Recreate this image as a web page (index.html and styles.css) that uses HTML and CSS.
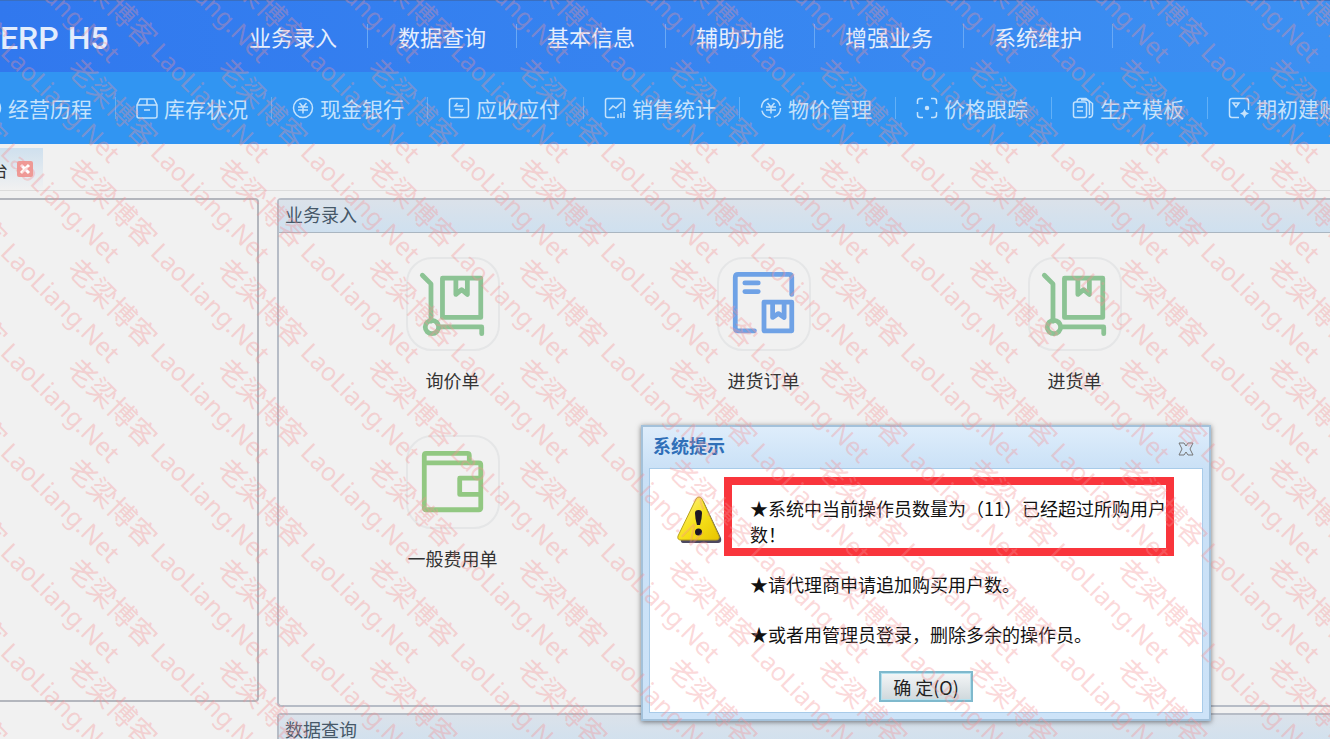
FILE: index.html
```html
<!DOCTYPE html>
<html lang="zh-CN">
  <head>
    <meta charset="UTF-8" />
    <meta name="viewport" content="width=device-width, initial-scale=1.0" />
    <title>ERP H5</title>
    <link rel="stylesheet" href="styles.css">
  </head>
  <body>
    <header>
      <div class="topbar">
        <h1 class="logo">ERP <span>H5</span></h1>
        <nav class="menu" aria-label="主菜单">
          <a href="#">业务录入</a>
          <a href="#">数据查询</a>
          <a href="#">基本信息</a>
          <a href="#">辅助功能</a>
          <a href="#">增强业务</a>
          <a href="#">系统维护</a>
        </nav>
      </div>
      <nav class="shortcuts" aria-label="快捷菜单">
        <a href="#">
          <svg viewBox="0 0 22 22"><circle cx="11" cy="11" r="9.5" /></svg>经营历程</a>
        <a href="#">
          <svg viewBox="0 0 22 22"><path d="M4 2h14l3 6v11q0 2-2 2H3q-2 0-2-2V8zM1 8h20M11 2v6M8 13h6" /></svg>库存状况</a>
        <a href="#">
          <svg viewBox="0 0 22 22"><circle cx="11" cy="11" r="9.5" /><path d="M7.500 6l3.500 4 3.500-4M6 10h10M6 13h10M11 10v6.500" /></svg>现金银行</a>
        <a href="#">
          <svg viewBox="0 0 22 22"><rect x="1.500" y="1.500" width="19" height="19" rx="2" /><path d="M15 9H7l2.500-3M7 12.500h8l-2.500 3" /></svg>应收应付</a>
        <a href="#">
          <svg viewBox="0 0 22 22"><path d="M11 20.500H3.500q-2 0-2-2v-15q0-2 2-2h15q2 0 2 2V14M5 13l4-4 3 2 6-6M14 17v4M17 16v5M20 15v6" /></svg>销售统计</a>
        <a href="#">
          <svg viewBox="0 0 22 22"><circle cx="11" cy="11" r="9.5" stroke-dasharray="12 3" /><path d="M7.500 6l3.500 4 3.500-4M6 10h10M6 13h10M11 10v6.500" /></svg>物价管理</a>
        <a href="#">
          <svg viewBox="0 0 22 22"><path d="M1.500 7V4q0-2.500 2.500-2.500h3M15 1.500h3q2.500 0 2.500 2.500v3M20.500 15v3q0 2.500-2.500 2.500h-3M7 20.500H4q-2.500 0-2.500-2.500v-3" /><circle cx="11" cy="11" r="1.500" fill="currentColor" /></svg>价格跟踪</a>
        <a href="#">
          <svg viewBox="0 0 22 22"><rect x="1.500" y="5" width="13" height="15.500" rx="2" /><path d="M5 5q0-3.500 3-3.500h6l6.500 5V17q0 3.500-4 3.500M9 3h5q3.500 0 3.500 4v11M5 10h6M5 14h6" /></svg>生产模板</a>
        <a href="#">
          <svg viewBox="0 0 22 22"><path d="M11 20.500H4q-2.500 0-2.500-2.500V4q0-2.500 2.500-2.500h14q2.500 0 2.500 2.500v9M5 6h6L8 10z" /><path d="M16.500 12l1.500 3 3 1.500-3 1.500-1.500 3-1.500-3-3-1.500 3-1.500z" fill="currentColor" stroke="none" /></svg>期初建账</a>
      </nav>
    </header>

    <div class="tabs">
      <div class="tab">
        台
        <button class="tab-close" aria-label="关闭标签">
          <svg viewBox="0 0 16 16"><path d="M4 4l8 8M12 4l-8 8" /></svg>
        </button>
      </div>
    </div>

    <main>
      <aside class="side"></aside>
      <div class="workspace">
        <section class="panel">
          <h2>业务录入</h2>
          <div class="tiles">
            <a class="tile green" href="#">
              <svg viewBox="0 0 94 94"><path d="M15 17l9 9v39M36 20h40v41H36zM50 20v17l6-5 6 5V20M33 71h44v7" /><circle cx="25" cy="71" r="7" /></svg>
              询价单
            </a>
            <a class="tile blue" href="#">
              <svg viewBox="0 0 94 94"><path d="M76 37V19q0-3-3-3H20q-3 0-3 3v53q0 3 3 3h17M27 25h14M27 34h14M47 45h29v30H47zM56 45v16l6-4 6 4V45" /></svg>
              进货订单
            </a>
            <a class="tile green" href="#">
              <svg viewBox="0 0 94 94"><path d="M15 17l9 9v39M36 20h40v41H36zM50 20v17l6-5 6 5V20M33 71h44v7" /><circle cx="25" cy="71" r="7" /></svg>
              进货单
            </a>
            <a class="tile lime" href="#">
              <svg viewBox="0 0 94 94"><path d="M17 27V19q0-2 2-2h43q2 0 2 2v8M17 27h57q2 0 2 2v45q0 2-2 2H19q-2 0-2-2zM76 43H54v17h22" /></svg>
              一般费用单
            </a>
          </div>
        </section>
        <section class="panel">
          <h2>数据查询</h2>
        </section>
      </div>
    </main>

    <div class="dialog" role="dialog" aria-labelledby="dialogTitle">
      <div class="dialog-head">
        <h2 id="dialogTitle">系统提示</h2>
        <button class="dialog-close" aria-label="关闭">
          <svg viewBox="0 0 16 16"><path d="M1 2h5l2 3 2-3h5l-3 6 3 6h-5l-2-3-2 3H1l3-6z" /></svg>
        </button>
      </div>
      <div class="dialog-body">
        <svg class="warning" viewBox="0 0 46 48">
          <defs>
            <linearGradient id="yellow" x1="0" y1="0" x2="1" y2="1">
              <stop offset="0" stop-color="#fff59a" />
              <stop offset=".5" stop-color="#f7e21c" />
              <stop offset="1" stop-color="#e8c400" />
            </linearGradient>
          </defs>
          <path d="M24 4q2 0 3 2l17 36q1 5-3 5H7q-4 0-3-4L21 6q1-2 3-2z" fill="#4d4960" stroke="none" />
          <path d="M22 1q2 0 3 2l17 37q1 4-3 4H4q-4 0-3-4L19 3q1-2 3-2z" fill="url(#yellow)" stroke="#b9a21c" />
          <path d="M18 17q0-3 3.500-3t3.500 3q0 5-2 12h-3q-2-7-2-12z" fill="#1d1626" stroke="none" />
          <circle cx="21.500" cy="36" r="3.500" fill="#1d1626" stroke="none" />
        </svg>
        <div class="message">
          <p class="marked">★系统中当前操作员数量为（11）已经超过所购用户<br>数！</p>
          <p>★请代理商申请追加购买用户数。</p>
          <p>★或者用管理员登录，删除多余的操作员。</p>
        </div>
        <button class="ok">确 定(O)</button>
      </div>
    </div>

    <div class="watermark" id="watermark" aria-hidden="true"></div>

    <script>
      // repeat the blog mark over the whole window, starting above the top left corner
      var mark = document.getElementById("watermark");
      var cols = Math.ceil(window.innerWidth / 150) + 2;
      var rows = Math.ceil(window.innerHeight / 100) + 2;
      mark.style.setProperty("--cols", cols);

      for (var i = 0; i < cols * rows; i++) {
        var cell = document.createElement("div");
        cell.innerHTML = "<span>老梁博客 <i>LaoLiang.Net</i></span>";
        mark.appendChild(cell);
      }
    </script>
  </body>
</html>
```
FILE: styles.css
```css
* {
  box-sizing: border-box;
}

body {
  margin: 0;
  height: 100vh;
  position: relative;
  overflow: hidden;
  display: flex;
  flex-direction: column;
  background: #f1f1f1;
  color: #333;
  font-family: "Noto Sans CJK SC", sans-serif;
  font-size: 18px;
}

h1,
h2,
p {
  margin: 0;
  font-weight: normal;
}

a {
  color: inherit;
  text-decoration: none;
}

button {
  padding: 0;
  border: 0;
  background: none;
  font: inherit;
}

svg {
  display: block;
  fill: none;
  stroke: currentColor;
}

/* header */
.topbar {
  height: 72px;
  padding-bottom: 2px;
  display: flex;
  align-items: center;
  border-top: 1px solid #3a6fc0;
  background: linear-gradient(to right, #3178ee, #3c90f2);
}

.logo {
  width: 219px;
  padding-top: 4px;
  display: flex;
  align-items: center;
  gap: 9px;
  color: #e3edfd;
  font-family: Roboto, sans-serif;
  font-size: 32px;
  font-weight: 500;
  line-height: 40px;
}

.menu {
  display: flex;
  color: #e4eefd;
  font-size: 22px;
  line-height: 24px;
}

.menu a {
  width: 149px;
  text-align: center;
  border-right: 1px solid #6aa9f5;
}

.shortcuts {
  height: 72px;
  display: flex;
  align-items: center;
  overflow: hidden;
  background: #3195f2;
  color: #c4e2fc;
  font-size: 21px;
  line-height: 22px;
}

.shortcuts a {
  flex: none;
  width: 156px;
  padding-left: 20px;
  display: flex;
  align-items: center;
  gap: 6px;
  white-space: nowrap;
  border-right: 1px solid #62b0f7;
}

.shortcuts a:first-child {
  margin-left: -40px;
}

.shortcuts svg {
  flex: none;
  width: 22px;
  height: 22px;
  stroke-width: 1.5;
}

/* tabs */
.tabs {
  height: 47px;
  padding-top: 4px;
  border-bottom: 1px solid #dcdcdc;
}

.tab {
  width: 52px;
  height: 42px;
  margin-left: -9px;
  display: flex;
  align-items: center;
  gap: 9px;
  background: linear-gradient(#cfe0ee, #f1f1f1);
  font-size: 17px;
}

.tab-close {
  width: 16px;
  height: 16px;
  border-radius: 2px;
  background: #ee9a96;
  color: #fff;
}

.tab-close svg {
  stroke-width: 3;
}

/* work area */
main {
  flex: 1;
  min-height: 0;
  padding-top: 7px;
  display: flex;
  gap: 18px;
}

.side {
  width: 259px;
  margin-bottom: 37px;
  border: 2px solid #b3b6bd;
  border-left: 0;
  border-radius: 0 4px 4px 0;
}

.workspace {
  flex: 1;
  min-width: 0;
  display: flex;
  flex-direction: column;
  gap: 6px;
}

.panel {
  flex: none;
  border: 2px solid #b6bcc6;
  border-right: 0;
  border-radius: 4px 0 0 4px;
}

.panel h2 {
  padding: 0 0 4px 6px;
  border-bottom: 1px solid #aab6c1;
  background: linear-gradient(#dbe2ea, #cfe0ef);
  color: #465868;
  font-size: 18px;
  line-height: 28px;
}

.tiles {
  min-height: 472px;
  padding: 24px 0 0 18px;
  display: grid;
  grid-template-columns: repeat(auto-fill, 311px);
  grid-auto-rows: 178px;
  overflow: hidden;
}

.tile {
  display: flex;
  flex-direction: column;
  align-items: center;
  gap: 16px;
  line-height: 26px;
}

.tile svg {
  width: 94px;
  height: 94px;
  border: 2px solid #e5e6e7;
  border-radius: 26px;
  stroke-width: 5;
  stroke-linejoin: round;
  stroke-linecap: round;
}

.green svg {
  color: #8cc394;
}

.lime svg {
  color: #92c882;
}

.blue svg {
  color: #6fa2e6;
}

/* message dialog */
.dialog {
  position: absolute;
  top: 425px;
  left: 641px;
  width: 570px;
  padding: 0 6px 6px;
  border: 2px solid #a3c1da;
  background: linear-gradient(#deedfb, #c9e0f6 44px, #cde3f8);
  box-shadow: 0 1px 5px rgba(0, 0, 0, 0.5);
  color: #111;
}

.dialog-head {
  height: 41px;
  padding: 0 9px 6px 4px;
  display: flex;
  align-items: center;
  justify-content: space-between;
}

.dialog-head h2 {
  color: #2f6fb8;
  font-size: 18px;
  font-weight: bold;
}

.dialog-close {
  width: 16px;
  height: 14px;
  margin-top: 7px;
  color: #777;
}

.dialog-body {
  padding: 8px 0 10px;
  display: grid;
  grid-template-columns: 74px 1fr;
  justify-items: start;
  border: 1px solid #a8cbe9;
  background: #fff;
}

.warning {
  width: 46px;
  height: 48px;
  margin: 19px 0 0 27px;
}

.message {
  display: flex;
  flex-direction: column;
  gap: 24px;
  line-height: 26px;
  white-space: nowrap;
}

.message p {
  padding-left: 26px;
}

.message .marked {
  width: 450px;
  margin-bottom: -9px;
  padding: 10px 0 1px 18px;
  border: 8px solid #f9353c;
}

.ok {
  grid-column: 1 / -1;
  justify-self: center;
  width: 94px;
  height: 31px;
  margin-top: 24px;
  border: 2px solid #7fb9cd;
  background: linear-gradient(#f4f6f7, #cfd8dc);
  box-shadow: inset 0 0 0 1px #b5e1ee;
  color: #222;
}

/* watermark, above everything */
.watermark {
  position: absolute;
  top: -138px;
  left: -226px;
  display: grid;
  grid-template-columns: repeat(var(--cols), 150px);
  grid-auto-rows: 100px;
  color: rgba(245, 145, 148, 0.36);
  font-size: 28px;
  line-height: 0;
  white-space: nowrap;
  pointer-events: none;
}

.watermark span {
  display: block;
  width: 0;
  transform: rotate(45deg);
  transform-origin: 0 0;
}

.watermark i {
  font-family: "Noto Sans", sans-serif;
  font-size: 25px;
  font-style: normal;
}
```
